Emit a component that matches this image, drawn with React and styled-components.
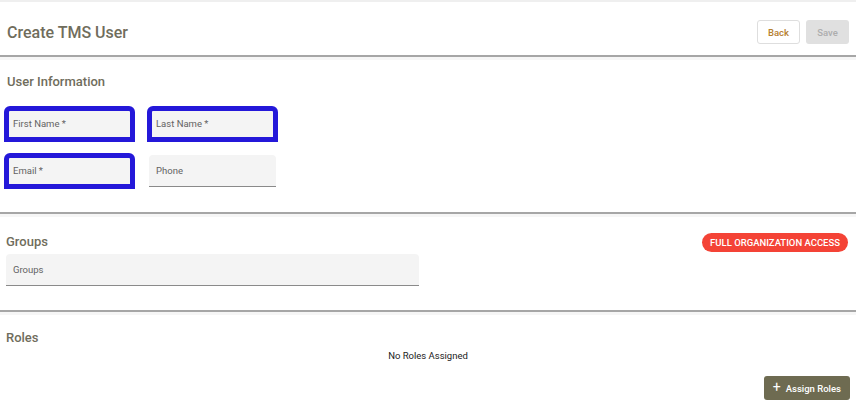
import React from 'react';
import styled, { createGlobalStyle } from 'styled-components';

const GlobalStyle = createGlobalStyle`
  body {
    margin: 0;
    background: #fff;
    font-family: Roboto, "Liberation Sans", Arial, sans-serif;
  }
`;

const Page = styled.div`
  border-top: 2px solid #efefef;
`;

const Header = styled.div`
  display: flex;
  align-items: center;
  justify-content: space-between;
  padding: 18px 7px 11px 7px;
`;

const PageTitle = styled.h1`
  margin: 0;
  font-size: 16px;
  font-weight: 500;
  color: #706d5c;
`;

const Actions = styled.div`
  display: flex;
  gap: 6px;
`;

const Button = styled.button`
  height: 24px;
  min-width: 43px;
  padding: 0 8px;
  border-radius: 3px;
  font-family: inherit;
  font-size: 9.5px;
  font-weight: 500;
  border: 1px solid ${p => (p.$variant === 'outline' ? '#dedede' : 'transparent')};
  background: ${p =>
    p.$variant === 'outline' ? '#fff' : p.$variant === 'disabled' ? '#e0e0e0' : '#6e6b51'};
  color: ${p =>
    p.$variant === 'outline' ? '#b5802f' : p.$variant === 'disabled' ? '#adadad' : '#fff'};
  display: inline-flex;
  align-items: center;
  justify-content: center;
  gap: 5px;
`;

const Plus = styled.span`
  font-size: 14px;
  font-weight: 400;
  line-height: 1;
  margin-top: -2px;
`;

const Divider = styled.div`
  height: 2px;
  background: #a6a6a6;
  border-bottom: 3px solid #f6f6f6;
`;

const Section = styled.section`
  padding: ${p => p.$pad};
`;

const SectionTitle = styled.h2`
  margin: 0;
  font-size: 13px;
  line-height: 16px;
  font-weight: 500;
  color: #706d5c;
`;

const FieldGrid = styled.div`
  display: grid;
  grid-template-columns: 127px 127px;
  column-gap: 16px;
  row-gap: 15px;
  margin-top: 18px;
`;

const Field = styled.div`
  width: ${p => p.$width || 127}px;
  height: 32px;
  box-sizing: border-box;
  background: #f4f4f4;
  border-radius: 4px 4px 0 0;
  border-bottom: 1px solid #8a8a8a;
  display: flex;
  align-items: center;
  padding: 0 7px;
  font-size: 9.5px;
  color: #636363;
  outline: ${p => (p.$marked ? '5px solid #2418d9' : 'none')};
  outline-offset: -3px;
`;

const TitleRow = styled.div`
  display: flex;
  align-items: center;
  justify-content: space-between;
  height: 20px;
  margin-bottom: 2px;
`;

const Pill = styled.span`
  height: 19px;
  padding: 0 8px;
  border-radius: 10px;
  background: #f44336;
  color: #fff;
  font-size: 9.5px;
  font-weight: 500;
  display: inline-flex;
  align-items: center;
`;

const Empty = styled.div`
  margin-top: 4px;
  text-align: center;
  font-size: 9.5px;
  line-height: 12px;
  color: #222;
`;

const Footer = styled.div`
  display: flex;
  justify-content: flex-end;
  margin-top: 14px;
`;

export default function App() {
  return (
    <Page>
      <GlobalStyle />
      <Header>
        <PageTitle>Create TMS User</PageTitle>
        <Actions>
          <Button $variant="outline">Back</Button>
          <Button $variant="disabled">Save</Button>
        </Actions>
      </Header>
      <Divider />

      <Section $pad="14px 6px 25px 6px">
        <SectionTitle style={{ marginLeft: 1 }}>User Information</SectionTitle>
        <FieldGrid>
          <Field $marked>First Name *</Field>
          <Field $marked>Last Name *</Field>
          <Field $marked>Email *</Field>
          <Field>Phone</Field>
        </FieldGrid>
      </Section>
      <Divider />

      <Section $pad="15px 8px 24px 6px">
        <TitleRow>
          <SectionTitle>Groups</SectionTitle>
          <Pill>FULL ORGANIZATION ACCESS</Pill>
        </TitleRow>
        <Field $width={413}>Groups</Field>
      </Section>
      <Divider />

      <Section $pad="15px 6px 2px 6px">
        <SectionTitle>Roles</SectionTitle>
        <Empty>No Roles Assigned</Empty>
        <Footer>
          <Button>
            <Plus>+</Plus>
            Assign Roles
          </Button>
        </Footer>
      </Section>
    </Page>
  );
}
